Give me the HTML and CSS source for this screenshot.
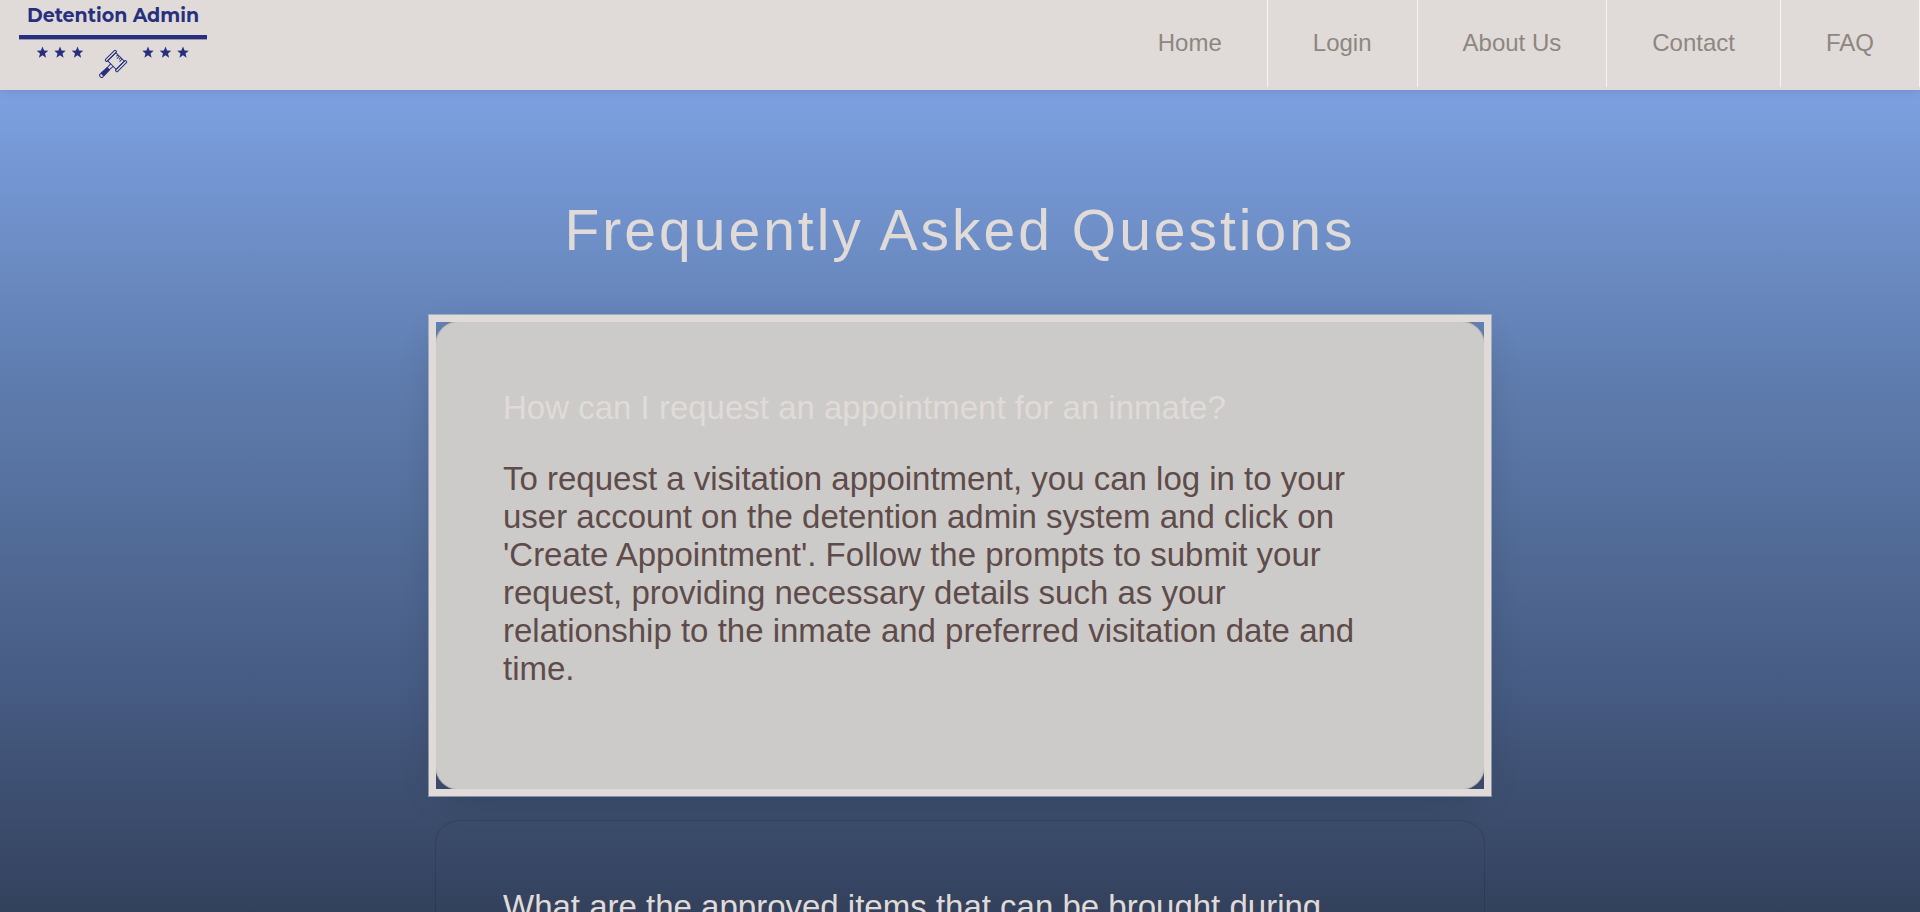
FILE: index.html
```html
<!DOCTYPE html>
<html lang="en">
<head>
<meta charset="utf-8">
<title>Frequently Asked Questions | Detention Admin</title>
<link rel="stylesheet" href="styles.css">
</head>
<body>
<header class="header">
  <a class="logo" href="#" aria-label="Detention Admin">
    <span class="logo-name">Detention Admin</span>
    <svg class="logo-mark" viewBox="0 0 188 44" aria-hidden="true">
      <defs>
        <path id="star" d="M0-6 1.6-2 5.8-1.8 2.5.9 3.6 5.2 0 2.8-3.6 5.2-2.5.9-5.8-1.8-1.6-2z"/>
      </defs>
      <rect width="188" height="4.4"/>
      <use href="#star" x="23.5" y="17.5"/>
      <use href="#star" x="41" y="17.5"/>
      <use href="#star" x="58.5" y="17.5"/>
      <use href="#star" x="129" y="17.5"/>
      <use href="#star" x="146.5" y="17.5"/>
      <use href="#star" x="164" y="17.5"/>
      <g class="gavel" transform="translate(97 26) rotate(45)">
        <path d="M-6-5.800H6V5.800H-6z"/>
        <rect x="-8.600" y="-7.200" width="2.600" height="14.400" rx="1"/>
        <rect x="6" y="-7.200" width="2.600" height="14.400" rx="1"/>
        <path d="M-3-5.800v2.300M-1-5.800v3.600M1-5.800v2.600M3-5.800v3.800"/>
        <path d="M-1.800 5.800-1.400 11H1.400L1.800 5.800"/>
        <path class="grip" d="M-1.700 11H1.700L2 19H-2z"/>
        <rect x="-2" y="19" width="4" height="3.200" rx="1.500"/>
      </g>
    </svg>
  </a>
  <nav class="nav" aria-label="Main">
    <a href="#">Home</a>
    <a href="#">Login</a>
    <a href="#">About Us</a>
    <a href="#">Contact</a>
    <a href="#">FAQ</a>
  </nav>
</header>
<main class="faq">
  <h1 class="title">Frequently Asked Questions</h1>
  <section class="card card-active">
    <h2 class="question">How can I request an appointment for an inmate?</h2>
    <p class="answer">To request a visitation appointment, you can log in to your user account on the detention admin system and click on 'Create Appointment'. Follow the prompts to submit your request, providing necessary details such as your relationship to the inmate and preferred visitation date and time.</p>
  </section>
  <section class="card">
    <h2 class="question">What are the approved items that can be brought during</h2>
  </section>
</main>
</body>
</html>
```

FILE: styles.css
```css
* { box-sizing: border-box; }

body {
  margin: 0;
  height: 100vh;
  overflow: hidden;
  font-family: "Liberation Sans", Arial, sans-serif;
  background: linear-gradient(#7fa3e4 8%, #5e7cad 42%, #465b82 76%, #33415c);
}

.header {
  position: relative;
  display: flex;
  justify-content: space-between;
  height: 90px;
  background: #e0dbd8;
  box-shadow: 0 0 10px rgba(0, 0, 0, 0.15);
}

.logo {
  display: flex;
  flex-direction: column;
  gap: 7px;
  width: 188px;
  margin-left: 19px;
  padding-top: 4px;
  color: #27307f;
  text-decoration: none;
}

.logo-name {
  font: 700 19px/24px Montserrat, "Open Sans", sans-serif;
  text-align: center;
  white-space: nowrap;
}

.logo-mark { display: block; fill: #27307f; }

.gavel { fill: none; stroke: #27307f; }

.grip { fill: #27307f; }

.nav {
  display: flex;
  height: 87px;
}

.nav a {
  display: flex;
  align-items: center;
  padding: 0 45px 2px;
  border-right: 1px solid #f5f4f3;
  color: #8e8680;
  font-size: 24px;
  text-decoration: none;
}

.faq {
  display: flex;
  flex-direction: column;
  align-items: center;
  gap: 30px;
  padding: 107px 20px 0;
}

.title {
  margin: 0 0 28px;
  color: #e0dbd8;
  font-size: 57px;
  font-weight: 400;
  line-height: 66px;
  letter-spacing: 3px;
}

.card {
  position: relative;
  width: 100%;
  max-width: 1050px;
  padding: 67px;
  border: 1px solid rgba(0, 0, 0, 0.12);
  border-radius: 24px;
}

.card-active {
  background: #cccbc9;
  box-shadow: 0 8px 36px rgba(0, 0, 0, 0.16);
}

/* Square focus frame around the rounded card */
.card-active::after {
  content: "";
  position: absolute;
  inset: -7px;
  border: 7px solid #e0dbd8;
  outline: 1px solid rgba(224, 219, 216, 0.5);
}

.question {
  margin: 0;
  color: #e0dbd8;
  font-size: 33px;
  font-weight: 400;
  line-height: 38px;
}

.answer {
  max-width: 880px;
  margin: 33px 0 34px;
  color: #5f4b49;
  font-size: 33px;
  line-height: 38px;
}
```
